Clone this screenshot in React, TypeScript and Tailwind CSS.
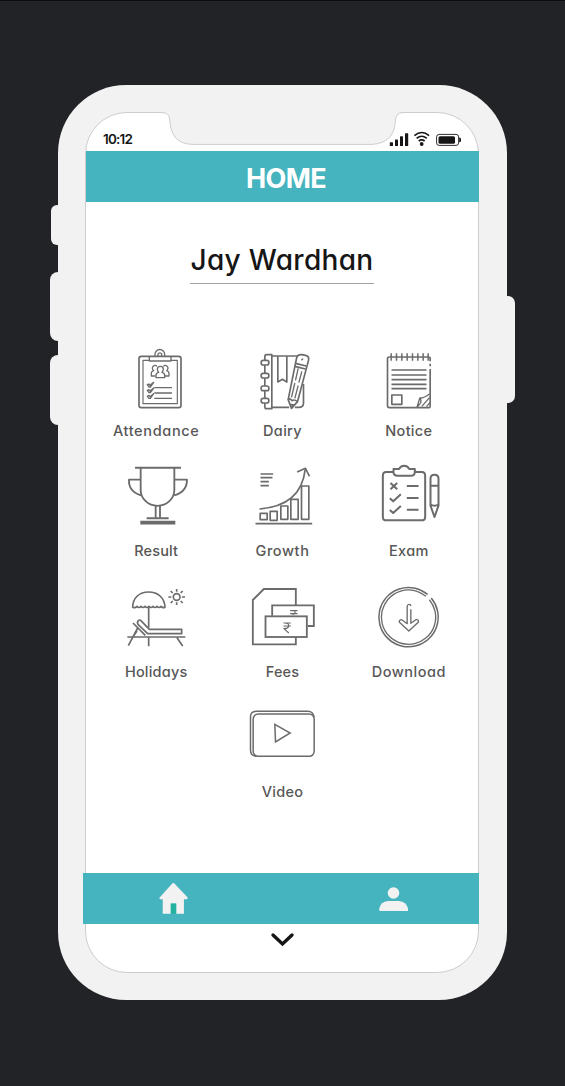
import React from "react";

type IconProps = { viewBox: string; children: React.ReactNode };

function Icon({ viewBox, children }: IconProps) {
  return (
    <svg
      viewBox={viewBox}
      className="h-20 w-[90px] shrink-0 overflow-visible"
      fill="none"
      stroke="#6b6b6b"
      strokeWidth={5}
      strokeLinejoin="round"
      aria-hidden="true"
    >
      {children}
    </svg>
  );
}

const AttendanceIcon = () => (
  <Icon viewBox="19 0 270 240">
    <rect x="103" y="46" width="126" height="154" rx="7" strokeWidth={5} />
    <path d="M133 58H115V188H218V58H199" strokeWidth={3.5} />
    <path d="M134 46V60H199V46M151 45V40a14 14 0 0 1 29 0v5M160 45V39a6 6 0 0 1 11 0v6" strokeWidth={4} />
    <g strokeWidth={4}>
      <path d="M154 110V103Q154 96 162 94Q158 90 158 85a9 9 0 0 1 18 0Q176 90 172 94Q180 96 180 103V110Z" />
      <path d="M152 105H140V96Q140 91 147 89Q143 86 143 81a8 8 0 0 1 14-5M181 105H193V96Q193 91 186 89Q190 86 190 81a8 8 0 0 0-14-5" />
      <path d="M149 140H202M149 156H202M149 172H202" />
      <path d="M128 131l5-2 3 4 11-9-10 14-4 0zM128 148l5-2 3 4 11-9-10 14-4 0zM128 165l5-2 3 4 11-9-10 14-4 0z" />
    </g>
  </Icon>
);

const DairyIcon = () => (
  <Icon viewBox="7.5 0 270 240">
    <path d="M96 41H112V203H96Q91 203 91 197V48Q91 41 96 41ZM112 45H189M112 199H164M181 199H193Q206 199 207 187V129" />
    <path d="M130 46V123L144 115L157 123V46" />
    <g fill="white">
      <rect x="80" y="58" width="23" height="14" rx="6" />
      <rect x="80" y="97" width="23" height="14" rx="6" />
      <rect x="80" y="135" width="23" height="14" rx="6" />
      <rect x="80" y="172" width="23" height="14" rx="6" />
    </g>
    <path
      d="M186 52Q189 40 201 41L213 43Q225 46 222 58L189 182L171 202L161 176Z"
      fill="white"
    />
    <path d="M183 67L215 75M181 76L213 84M161 177Q165 169 173 179Q179 174 189 182M166 190L179 192M171 200L175 193" />
    <path d="M191 82L183 118M181 126L171 169M202 91L193 125M191 134L181 172M201 58Q202 54 206 54" strokeWidth={4} />
  </Icon>
);

const NoticeIcon = () => (
  <Icon viewBox="-3.5 0 270 240">
    <path d="M78 48H72Q67 48 67 54V193Q67 200 73 200H192Q195 200 195 195V84M195 76V68M195 61V50Q195 48 190 48" />
    <path d="M78 48H190" strokeWidth={4} />
    <path d="M78 37V59M94 37V59M110 37V59M126 37V59M142 37V59M158 37V59M174 37V59M189 37V59" strokeWidth={4.5} />
    <path d="M79 87H184M79 102H184M79 116H184M79 130H184M79 143H184" />
    <rect x="80" y="162" width="30" height="28" />
    <path d="M155 200L164 171Q176 172 193 159M164 171Q169 177 167 185L155 200M170 196L193 170M184 197L194 185" strokeWidth={4} />
  </Icon>
);

const ResultIcon = () => (
  <Icon viewBox="18 16 270 240">
    <path d="M90 36H228M125 188H191" strokeWidth={6} />
    <path d="M107 37V103a50 47 0 0 0 101 0V37M105 72H72Q70 108 108 119M210 72H246Q246 108 208 119" strokeWidth={5.5} />
    <path d="M152 151V186M165 151V186" strokeWidth={5.5} />
    <path d="M106 201H211" strokeWidth={11} />
  </Icon>
);

const GrowthIcon = () => (
  <Icon viewBox="7.5 16 270 240">
    <path d="M63 204H233M78 55H116M78 66H114M78 78H103M78 90H103" />
    <path d="M77 173H98V192H77ZM107 167H128V194H107ZM139 151H160V191H139ZM169 131H191V191H169ZM201 91H223V191H201Z" />
    <path d="M75 160C127 156 201 138 212 42M188 49L213 38L225 62" />
  </Icon>
);

const ExamIcon = () => (
  <Icon viewBox="-3.5 16 270 240">
    <path d="M85 49H63Q53 49 53 60V183Q53 194 63 194H170Q180 194 180 183V60Q180 49 170 49H149" strokeWidth={6} />
    <path d="M85 40H102Q106 30 117 30Q128 30 132 40H149V48Q149 60 138 60H97Q85 60 85 48Z" strokeWidth={6} />
    <path d="M76 82L96 101M96 82L76 101M74 128L84 137L107 116M74 163L84 172L107 151M125 91H160M125 127H160M125 162H160" strokeWidth={6} />
    <path d="M196 150V69Q196 57 208 57Q220 57 220 69V150L208 184ZM196 90H220M196 147Q208 153 220 147" strokeWidth={6} />
  </Icon>
);

const HolidaysIcon = () => (
  <Icon viewBox="18 17 270 240">
    <path d="M83 92C84 64 103 47 131 47S178 64 180 92Q174 97 168 90Q162 97 156 90Q150 97 144 90Q138 97 132 90Q126 97 120 90Q114 97 108 90Q102 97 96 90Q90 97 83 92Z" />
    <path d="M131 92V154M131 182V210M67 182H241M84 140L121 177M98 155L70 208M84 181L96 164M216 184L233 209" />
    <path d="M107 132L133 159H230V172H128L99 144Q95 136 101 132Q105 130 107 132Z" />
    <circle cx="215" cy="62" r="10" />
    <path d="M215 38V46M215 78V86M190 62H199M231 62H240M197 44L203 50M227 74L233 80M197 80L203 74M227 50L233 44" />
  </Icon>
);

const FeesIcon = () => (
  <Icon viewBox="7.5 17 270 240">
    <g strokeLinejoin="miter" strokeWidth={5.5}>
      <path d="M184 86V38H88L55 71V204H184V183" />
      <path d="M113 118V87H238V149H219" />
      <rect x="93" y="120" width="124" height="62" />
    </g>
    <path d="M167 103H189M167 112H189M181 103Q184 112 174 114" strokeWidth={3.5} />
    <path d="M147 140H169M147 149H169M151 140Q163 140 163 149Q161 157 148 157L163 170" strokeWidth={3.5} />
  </Icon>
);

const DownloadIcon = () => (
  <Icon viewBox="-3.5 17 270 240">
    <path d="M187.3 54.3A89 89 0 1 0 198.2 65.2" strokeWidth={4.5} />
    <path d="M182.4 59.9A81.5 81.5 0 1 0 192.6 70.1" strokeWidth={4} />
    <path
      d="M137 99V141L152 130Q160 128 160 137L131 164L102 137Q103 128 111 131L126 142V90Q127 84 132 84Q137 84 137 89"
      strokeWidth={4}
    />
  </Icon>
);

const VideoIcon = () => (
  <Icon viewBox="591.5 34 270 240">
    <rect x="640" y="70" width="183" height="127" rx="15" strokeWidth={4.5} />
    <path d="M650 197Q632 196 632 179V79Q632 62 650 62H804Q820 62 823 80" strokeWidth={4.5} />
    <path d="M705 101L751 127L707 154Z" strokeWidth={4.5} strokeLinejoin="miter" />
  </Icon>
);

const items: { label: string; icon: React.ReactNode; tracking: string }[] = [
  { label: "Attendance", icon: <AttendanceIcon />, tracking: "tracking-[0.65px]" },
  { label: "Dairy", icon: <DairyIcon />, tracking: "tracking-[0.3px]" },
  { label: "Notice", icon: <NoticeIcon />, tracking: "tracking-[0.3px]" },
  { label: "Result", icon: <ResultIcon />, tracking: "tracking-[0.15px]" },
  { label: "Growth", icon: <GrowthIcon />, tracking: "tracking-[0.6px]" },
  { label: "Exam", icon: <ExamIcon />, tracking: "tracking-[0.3px]" },
  { label: "Holidays", icon: <HolidaysIcon />, tracking: "tracking-[0.2px]" },
  { label: "Fees", icon: <FeesIcon />, tracking: "tracking-[0.1px]" },
  { label: "Download", icon: <DownloadIcon />, tracking: "tracking-[0.5px]" },
  { label: "Video", icon: <VideoIcon />, tracking: "tracking-[0.3px]" },
];

function StatusBar() {
  return (
    <div className="relative flex h-[38px] shrink-0 items-end justify-between pr-[17px] pb-[4px] pl-[17px]">
      <svg className="absolute -top-[2px] left-[72px] h-[36px] w-[250px]" viewBox="158 111 250 36" fill="none" aria-hidden="true">
        <path d="M163 111V112.5Q169.7 112.5 169.7 120Q171 144.4 193 144.4H372Q394 143 395.3 122Q395.3 112.5 402 112.5V111Z" fill="#f2f2f2" />
        <path d="M162 112.6Q169.7 112.6 169.7 120Q171 144.4 193 144.4H372Q394 143 395.3 122Q395.3 112.6 403 112.6" stroke="#cdcdcd" />
      </svg>
      <span className="text-[13.5px] leading-[15px] font-semibold tracking-[-0.8px] text-[#161616]">10:12</span>
      <svg className="h-[16px] w-[72px]" viewBox="389 131 72 16" fill="none" aria-hidden="true">
        <g fill="#161616">
          <rect x="389.8" y="142.3" width="3.2" height="3.7" rx="0.6" />
          <rect x="395" y="139.5" width="3" height="6.5" rx="0.6" />
          <rect x="400" y="136.3" width="3" height="9.7" rx="0.6" />
          <rect x="405" y="133.3" width="3.2" height="12.7" rx="0.6" />
          <circle cx="421.7" cy="144" r="1.9" />
          <rect x="438.5" y="136.2" width="16.5" height="7.6" rx="1.5" />
          <path d="M459.2 137.5Q461.3 137.5 461.3 139.9Q461.3 142.3 459.2 142.3Z" />
        </g>
        <path d="M414.4 135.6Q421.7 129.4 429.1 135.6M416.6 138.4Q421.7 134.1 426.8 138.4M418.7 141Q421.7 138.7 424.7 141" stroke="#161616" strokeWidth="1.6" />
        <rect x="436.6" y="134.4" width="22" height="11" rx="2.5" stroke="#161616" strokeWidth="0.9" />
      </svg>
    </div>
  );
}

export default function App() {
  return (
    <div className="flex h-[1086px] w-[565px] items-start justify-center border-t border-[#0c0c0d] bg-[#222326] pt-[84px] font-[Inter,'Noto_Sans',sans-serif] [font-feature-settings:'cv11']">
      <div className="relative h-[915px] w-[449px] rounded-[68px] bg-[#f2f2f2] px-[27px] pt-[27px]">
        <div className="absolute top-[120px] -left-[7px] h-[40px] w-[12px] rounded-l-[6px] bg-[#f2f2f2]" />
        <div className="absolute top-[187px] -left-[8.5px] h-[69px] w-[14px] rounded-l-[8px] bg-[#f2f2f2]" />
        <div className="absolute top-[270px] -left-[8.5px] h-[70px] w-[14px] rounded-l-[8px] bg-[#f2f2f2]" />
        <div className="absolute top-[211px] -right-[8px] h-[107px] w-[14px] rounded-r-[7px] bg-[#f2f2f2]" />

        <div className="flex h-[861px] w-[394px] flex-col rounded-[42px] border border-[#cdcdcd] bg-white">
          <StatusBar />
          <header className="-mr-px flex h-[51px] shrink-0 items-center justify-center bg-[#46b4be] pt-[3px] pl-[7px]">
            <h1 className="text-[27px] leading-none font-bold tracking-[-0.6px] text-white">HOME</h1>
          </header>

          <main className="flex flex-1 flex-col items-center">
            <div className="mt-[38px] flex h-[44px] w-[184px] justify-center border-b border-[#a5a5a5]">
              <h2 className="text-[28px] leading-[40px] font-medium tracking-[0.3px] whitespace-nowrap text-[#161616]">Jay Wardhan</h2>
            </div>
            <div className="mt-[57px] ml-px flex w-[379px] flex-wrap justify-center gap-y-[20.4px]">
              {items.map((item) => (
                <button key={item.label} className="flex h-[100px] w-1/3 flex-col items-center">
                  {item.icon}
                  <span className={`text-[14.5px] leading-5 font-medium text-[#575757] ${item.tracking}`}>{item.label}</span>
                </button>
              ))}
            </div>
          </main>

          <nav className="-mr-px -ml-[3px] flex h-[51px] shrink-0 items-center justify-between bg-[#46b4be] pr-[71px] pl-[76px]">
            <svg className="h-[31px] w-[29px]" viewBox="358 581 86 92" aria-hidden="true">
              <path d="M398 582Q400 580 403 582L443 624Q444 629 439 629H432V672H409V642H393V672H369V629H362Q357 628 360 624Z" fill="#f2f2f2" />
              <path d="M393 642H409V672H393Z" fill="#24b1a0" />
            </svg>
            <svg className="h-[24px] w-[29px]" viewBox="1017 590 87 72" aria-hidden="true">
              <circle cx="1060.5" cy="608" r="17.5" fill="#f2f2f2" />
              <path d="M1018 662V654Q1022 634 1044 632H1077Q1099 634 1104 654V662Z" fill="#f2f2f2" />
            </svg>
          </nav>
          <div className="flex h-[48px] shrink-0 justify-center pt-[8px]">
            <svg className="h-[15px] w-[25px]" viewBox="0 0 25 15" fill="none" aria-hidden="true">
              <path d="M3 3L12.5 12L22 3" stroke="#161616" strokeWidth="3.4" strokeLinecap="round" />
            </svg>
          </div>
        </div>
      </div>
    </div>
  );
}
